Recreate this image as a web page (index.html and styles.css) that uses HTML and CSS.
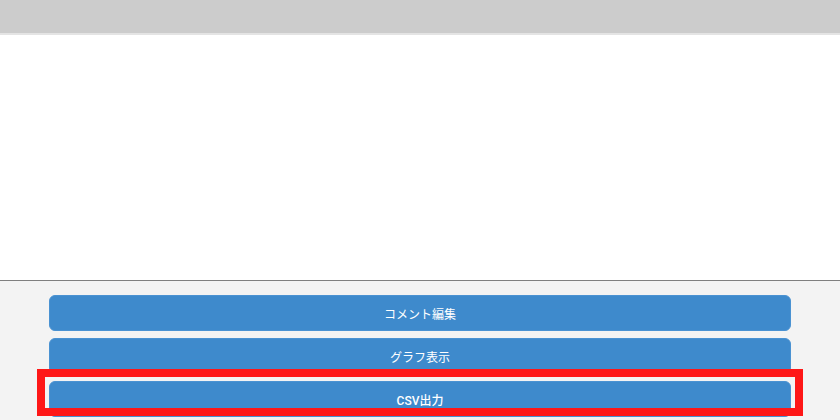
FILE: index.html
```html
<!DOCTYPE html>
<html lang="ja">
<head>
  <meta charset="UTF-8" />
  <meta name="viewport" content="width=device-width, initial-scale=1.0"/>
  <title>メニュー</title>
  <link rel="stylesheet" href="styles.css">
</head>
<body>

  <div class="page">
    <!-- Header bar -->
    <div class="header"></div>

    <!-- Main content (empty) -->
    <div class="content"></div>

    <!-- Footer buttons -->
    <div class="footer">
      <button class="btn">コメント編集</button>
      <button class="btn">グラフ表示</button>
      <button class="btn btn-csv">CSV出力</button>
      <div class="highlight"></div>
    </div>
  </div>

</body>
</html>
```

FILE: styles.css
```css
body {
  margin: 0;
  font-family: Roboto, "Noto Sans CJK JP", sans-serif;
  background: #fff;
  overflow: hidden;
}

.page {
  display: flex;
  flex-direction: column;
  height: 420px;
}

.header {
  height: 33px;
  background: #cccccc;
  border-bottom: 2px solid #e4e4e4;
}

.content {
  height: 245px;
  background: #fff;
  border-bottom: 1px solid #7f7f7f;
}

.footer {
  position: relative;
  flex: 1;
  background: #f3f3f3;
  padding: 14px 49px 0;
  display: flex;
  flex-direction: column;
  gap: 7px;
}

.btn {
  height: 36px;
  flex-shrink: 0;
  border: 1px solid #4a92d2;
  border-radius: 6px;
  background: #3e8acc;
  color: #fff;
  font-family: Roboto, "Noto Sans CJK JP", sans-serif;
  font-size: 12px;
  cursor: pointer;
}

.btn-csv {
  font-weight: 500;
}

.highlight {
  position: absolute;
  left: 37px;
  top: 88px;
  width: 750px;
  height: 31px;
  border: 8px solid #fe1717;
}
```
